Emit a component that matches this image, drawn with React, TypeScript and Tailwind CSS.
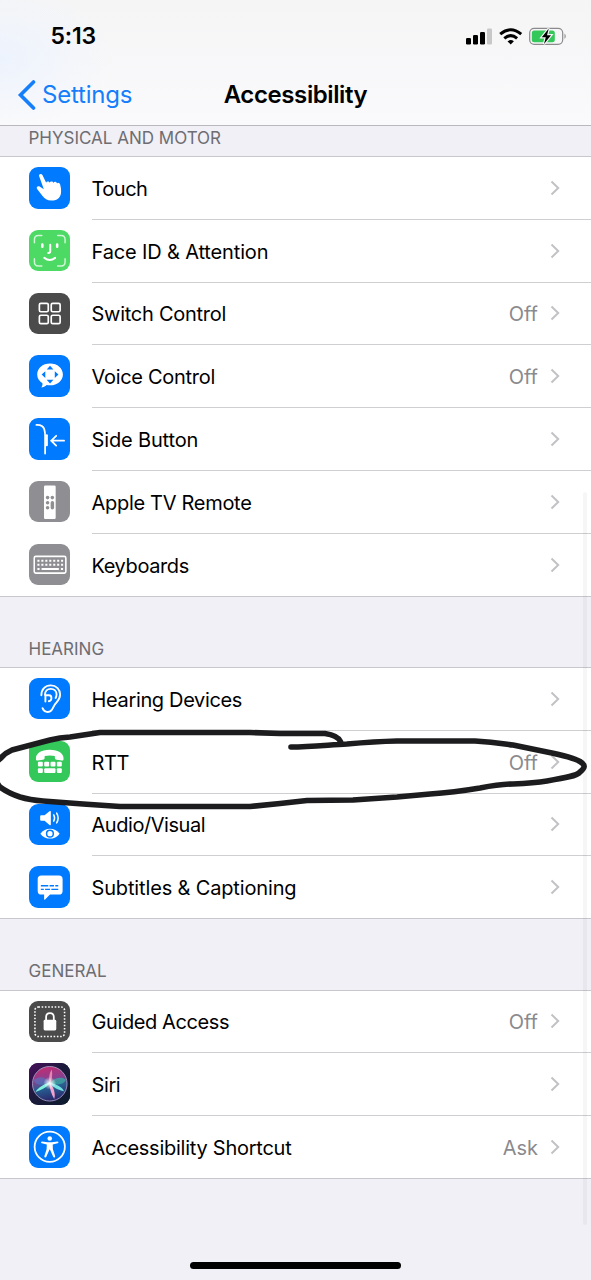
import type { ReactNode } from 'react';

type Item = {
  label: string;
  value?: string;
  bg: string;
  icon: ReactNode;
  tracking: string;
};

const touch = (
  <path
    fill="#fff"
    d="M10.200 9C9.700 7 12.700 6.200 13.600 8.200L17.400 16C17.600 14.200 20.400 14 21 15.900C21.400 14.100 24.200 14.100 24.800 16.100C25.400 14.400 28 14.800 28.400 16.800C29 15.200 31.200 16 31.600 18C32.300 21 32.800 23.500 32.300 27C31.500 31.500 27.500 34 23 34C18.500 34.200 16 32 13.500 29L8.200 22.200C7 20.400 9 18.700 10.800 19.800L15 22.600Z"
  />
);

const faceId = (
  <g fill="none" stroke="#fff" strokeLinecap="round">
    <path strokeWidth="1.5" opacity=".75" d="M5.500 13V9.500Q5.500 5.500 9.500 5.500H13M29 5.500h3.500q4 0 4 4V13M36.500 29v3.500q0 4-4 4H29M13 36.500H9.500q-4 0-4-4V29" />
    <path strokeWidth="2.600" d="M13.500 14.800v2.200M28.500 14.800v2.200" />
    <path strokeWidth="2" d="M21.500 15v6.500q0 1.800-2 1.800" />
    <path strokeWidth="2" d="M15.500 28.200q5.500 4.200 11 0" />
  </g>
);

const switchControl = (
  <g fill="none" stroke="#fff" strokeWidth="1.700">
    <rect x="10.500" y="10.500" width="9" height="8.500" rx="1.500" />
    <rect x="22.500" y="10.500" width="9" height="8.500" rx="1.500" />
    <rect x="10.500" y="22.500" width="9" height="8.500" rx="1.500" />
    <rect x="22.500" y="22.500" width="9" height="8.500" rx="1.500" />
  </g>
);

const voiceControl = (
  <g>
    <path fill="#fff" d="M21.300 8.700c7.600 0 13 4.900 13 11s-5.400 11-13 11c-1.200 0-2.300-.1-3.400-.4-1.600 1.500-3.700 2.500-5.500 2.500 1-1.200 1.400-2.600 1.200-4.200-3.200-2-5.300-5.200-5.300-8.900 0-6.100 5.400-11 13-11z" />
    <path fill="#007aff" d="m21.300 10.800 3.400 3.800h-6.800zM21.300 28.800l3.400-3.800h-6.800zM12.800 19.800l3.700-3.400v6.800zM29.800 19.800l-3.700-3.400v6.800z" />
  </g>
);

const sideButton = (
  <g fill="none" stroke="#fff" strokeLinecap="round" strokeWidth="1.800">
    <path d="M7.500 7q6.500-.3 8 4.500c.6 2 .8 4 .8 6.500V36" />
    <path strokeWidth="2.200" d="M18 17.500v10" />
    <path d="M35.500 23H23M27.500 18l-5 5 5 5" />
  </g>
);

const remote = (
  <g>
    <rect x="15.200" y="4.500" width="11.800" height="34" rx="1.200" fill="#fff" />
    <g fill="#8e8e93">
      <circle cx="18.800" cy="16.800" r="1.800" />
      <circle cx="23.600" cy="16.800" r="1.800" />
      <circle cx="18.800" cy="22" r="1.800" />
      <circle cx="18.800" cy="27" r="1.800" />
      <rect x="21.900" y="20.200" width="3.500" height="8.600" rx="1.750" />
    </g>
  </g>
);

const keyboard = (
  <g stroke="#fff" fill="none">
    <rect x="5.300" y="12.500" width="32" height="17" rx="1.600" strokeWidth="1.600" />
    <path strokeWidth="2" strokeDasharray="2.100 1.900" d="M8.500 17h26M8.500 21h26" />
    <path strokeWidth="2" d="M8.500 25.200h2.200M12.700 25.200h17.500M32.300 25.200h2.200" />
  </g>
);

const ear = (
  <g fill="none" stroke="#fff" strokeWidth="1.900" strokeLinecap="round">
    <path d="M12.500 17.500c0-6 3.800-10 9.500-10s9.500 4 9.500 9.300c0 4.700-2.800 6.800-4.700 9.200-2.200 2.800-2.500 5-4.300 6.900-2.300 2.400-7 2.200-8.800-2.400" />
    <path d="M16.200 17c0-4 2.300-6 5.800-6 3.600 0 5.900 2.500 5.900 5.800 0 1.400-.4 2.500-1 3.500" />
    <path d="M16.400 17.500h3.800c3.500.2 3.200 5.600-.2 6M16.600 17.500v6.300" />
  </g>
);

const tty = (
  <g fill="#fff">
    <path d="M7 18.200c-.3-5.600 5-9.400 14-9.400s14.300 3.800 14 9.400c-.1 1.300-.7 1.600-1.800 1.500l-5.200-.6c-1.200-.2-1.700-.7-1.800-1.800l-.1-2c-3-.9-7.200-.9-10.200 0l-.1 2c-.1 1.100-.6 1.600-1.800 1.800l-5.200.6c-1.100.1-1.700-.2-1.800-1.500z" />
    <rect x="9" y="21" width="5" height="4.800" rx="1" />
    <rect x="15.400" y="21" width="5" height="4.800" rx="1" />
    <rect x="21.800" y="21" width="5" height="4.800" rx="1" />
    <rect x="28.200" y="21" width="5" height="4.800" rx="1" />
    <rect x="9" y="27.600" width="5" height="4.800" rx="1" />
    <rect x="15.400" y="27.600" width="11.400" height="4.800" rx="1" />
    <rect x="28.200" y="27.600" width="5" height="4.800" rx="1" />
  </g>
);

const audioVisual = (
  <g>
    <path fill="#fff" d="M12.200 11.500h3.500l5.400-4.300q1-.5 1 .6v13q0 1-1 .6l-5.400-4.500h-3.500q-.9 0-.9-.9v-3.600q0-.9.900-.9z" />
    <path fill="none" stroke="#fff" strokeWidth="1.500" strokeLinecap="round" d="M25 11q1.800 3.200 0 6.400M28 9.200q3 5 0 10" />
    <path fill="#fff" d="M11.500 30c5-6.700 14.500-6.700 19.500 0-5 6.700-14.500 6.700-19.500 0z" />
    <circle cx="21.200" cy="30" r="3.400" fill="none" stroke="#007aff" strokeWidth="1.500" />
  </g>
);

const subtitles = (
  <g>
    <path fill="#fff" d="M12.500 9.500h17.800q3.700 0 3.700 3.700v12q0 3.700-3.700 3.700h-9l-5 4.900q-1 .8-1-.5v-4.400h-2.800q-3.700 0-3.700-3.700v-12q0-3.700 3.700-3.700z" />
    <path fill="none" stroke="#007aff" strokeWidth="1.400" d="M12 20h7.500M20.800 20h4.500M26.600 20h3M12 23.600h3M16.300 23.600h5M22.600 23.600h7" />
  </g>
);

const guidedAccess = (
  <g>
    <rect x="6" y="6" width="30" height="30" rx="3.500" fill="none" stroke="#fff" strokeWidth="1.600" strokeDasharray="1.600 1.700" />
    <rect x="14.800" y="19" width="12.800" height="10.800" rx="1.400" fill="#fff" />
    <path fill="none" stroke="#fff" strokeWidth="1.800" d="M17.300 19.500v-3.200q0-4 3.900-4t3.900 4v3.200" />
  </g>
);

const siri = (
  <g>
    <defs>
      <linearGradient id="siriBg" x1="0" y1="0" x2="1" y2="1">
        <stop offset="0" stopColor="#4a0f5c" />
        <stop offset=".45" stopColor="#1c1a3c" />
        <stop offset="1" stopColor="#0b1b2c" />
      </linearGradient>
      <linearGradient id="siriOrb" x1=".4" y1="0" x2=".6" y2="1">
        <stop offset="0" stopColor="#c22c72" />
        <stop offset=".35" stopColor="#8c3f8e" />
        <stop offset=".6" stopColor="#275f92" />
        <stop offset="1" stopColor="#2a2368" />
      </linearGradient>
      <radialGradient id="siriGlow">
        <stop offset="0" stopColor="#fff" />
        <stop offset="1" stopColor="#fff" stopOpacity="0" />
      </radialGradient>
    </defs>
    <rect width="42" height="42" fill="url(#siriBg)" />
    <circle cx="21" cy="21" r="17.500" fill="url(#siriOrb)" stroke="#a79bc4" strokeWidth=".9" />
    <path fill="#3d8fd8" opacity=".45" d="M21 20C16 13 10 13 5 17c0 5 8 7 16 3z" />
    <path fill="#2fc3a8" opacity=".6" d="M21 20c5-5 12-7 16.500-3-2 5-9 6-16.500 3z" />
    <path fill="#7ef0dc" d="M21.500 19.500c-6 1.500-12 5-15 10 5-2 12-4.500 15-10z" />
    <path fill="#7ef0ea" opacity=".9" d="M21 20c6 1 12 4 14.500 8.500-6-1-12-4-14.500-8.500z" />
    <path fill="#f5a0d0" d="M20.500 20c.2 6 2.500 12 5 16.500 1.500-5 0-12-5-16.500z" />
    <path fill="#ff9fc0" opacity=".75" d="M21 20.500c-1.200-5-.8-10 2-14 1 5 .5 10-2 14z" />
    <circle cx="21" cy="20.500" r="6.500" fill="url(#siriGlow)" />
  </g>
);

const accessibility = (
  <g>
    <circle cx="21" cy="21" r="15.300" fill="none" stroke="#fff" strokeWidth="1.800" />
    <circle cx="21" cy="12.600" r="2.300" fill="#fff" />
    <path fill="#fff" d="m13.200 15.700 5.800.8h4l5.800-.8q1 0 1 .8t-.8 1l-5 1.200.2 4.800 2.300 7q.1 1-.7 1.300t-1.300-.6l-3.300-7.300h-.4l-3.300 7.300q-.5.900-1.300.6t-.7-1.300l2.300-7 .2-4.800-5-1.200q-.8-.2-.8-1t1-.8z" />
  </g>
);

const motor: Item[] = [
  { label: 'Touch', bg: 'bg-[#007aff]', icon: touch, tracking: 'tracking-[-0.5px]' },
  { label: 'Face ID & Attention', bg: 'bg-[#4cd964]', icon: faceId, tracking: 'tracking-[-0.15px]' },
  { label: 'Switch Control', value: 'Off', bg: 'bg-[#4b4b4c]', icon: switchControl, tracking: 'tracking-[-0.27px]' },
  { label: 'Voice Control', value: 'Off', bg: 'bg-[#007aff]', icon: voiceControl, tracking: 'tracking-[-0.3px]' },
  { label: 'Side Button', bg: 'bg-[#007aff]', icon: sideButton, tracking: 'tracking-[-0.15px]' },
  { label: 'Apple TV Remote', bg: 'bg-[#8e8e93]', icon: remote, tracking: 'tracking-[-0.3px]' },
  { label: 'Keyboards', bg: 'bg-[#8e8e93]', icon: keyboard, tracking: 'tracking-[-0.4px]' },
];

const hearing: Item[] = [
  { label: 'Hearing Devices', bg: 'bg-[#007aff]', icon: ear, tracking: 'tracking-[-0.35px]' },
  { label: 'RTT', value: 'Off', bg: 'bg-[#34c759]', icon: tty, tracking: 'tracking-[-0.4px]' },
  { label: 'Audio/Visual', bg: 'bg-[#007aff]', icon: audioVisual, tracking: 'tracking-[-0.45px]' },
  { label: 'Subtitles & Captioning', bg: 'bg-[#007aff]', icon: subtitles, tracking: 'tracking-[-0.15px]' },
];

const general: Item[] = [
  { label: 'Guided Access', value: 'Off', bg: 'bg-[#4b4b4c]', icon: guidedAccess, tracking: 'tracking-[-0.4px]' },
  { label: 'Siri', bg: 'bg-[#1c1a3c]', icon: siri, tracking: 'tracking-[-0.4px]' },
  { label: 'Accessibility Shortcut', value: 'Ask', bg: 'bg-[#007aff]', icon: accessibility, tracking: 'tracking-[-0.25px]' },
];

function Row({ item, last }: { item: Item; last: boolean }) {
  return (
    <div className={`flex items-stretch pl-[28.5px] ${last ? 'h-[61.8px]' : 'h-[62.8px]'}`}>
      <div className={`mt-[10px] h-[41.5px] w-[41.5px] shrink-0 overflow-hidden rounded-[9px] ${item.bg}`}>
        <svg viewBox="0 0 42 42" className="h-full w-full">{item.icon}</svg>
      </div>
      <div className={`ml-[21.5px] flex flex-1 items-center pr-[31px] ${last ? '' : 'border-b border-[#cfcfd2]'}`}>
        <span className={`mt-[2px] flex-1 whitespace-nowrap text-[20px] ${item.tracking}`}>{item.label}</span>
        {item.value && <span className="mt-[2px] mr-[12px] text-[20px] text-[#8a8a8e]">{item.value}</span>}
        <svg viewBox="0 0 10 16" className="h-4 w-2.5" fill="none" stroke="#c2c2c6" strokeWidth="2">
          <path d="m1.500 1.500 6.700 6.500-6.700 6.500" />
        </svg>
      </div>
    </div>
  );
}

function Group({ items }: { items: Item[] }) {
  return (
    <div className="shrink-0 border-y border-[#c8c8cc] bg-white">
      {items.map((item, i) => (
        <Row key={item.label} item={item} last={i === items.length - 1} />
      ))}
    </div>
  );
}

function StatusIcons() {
  return (
    <svg viewBox="0 0 104 20" className="h-5 w-[104px]">
      <rect x="1" y="12" width="5" height="6.500" rx="1.200" />
      <rect x="8" y="9" width="5" height="9.500" rx="1.200" />
      <rect x="15" y="6" width="5" height="12.500" rx="1.200" />
      <rect x="22" y="2.500" width="5" height="16" rx="1.200" fill="#c8c8c8" />
      <g fill="none" stroke="#000" strokeWidth="3">
        <path d="M35.200 8.200q10.500-9 21 0" />
        <path d="M39.300 12.300q6.400-5.400 12.800 0" />
      </g>
      <path d="M42.500 15.300q3.200-2.400 6.400 0l-3.200 3.300z" />
      <rect x="64.700" y="2.300" width="33" height="16" rx="4.500" fill="none" stroke="#8b8b8d" strokeWidth="1.200" />
      <path d="M99.500 7.500q2.500 2.700 0 5.600z" fill="#8b8b8d" />
      <rect x="66.800" y="4.400" width="23" height="11.800" rx="2.500" fill="#34c759" />
      <path d="m83.800 2.500-7 8.800h4l-1.800 6.700 7-8.800h-4z" stroke="#f6f6f7" strokeWidth="2.400" paintOrder="stroke" />
    </svg>
  );
}

export default function App() {
  return (
    <div className="relative flex h-[1280px] w-[591px] flex-col overflow-hidden bg-[#f1f0f6] font-['Inter','Liberation_Sans',sans-serif] text-black">
      <header className="h-[126px] shrink-0 border-b border-[#b9b9bc] bg-[radial-gradient(ellipse_110px_70px_at_0px_58px,#edf3fd,transparent),linear-gradient(to_bottom,#f5f5f6,#fafafc)]">
        <div className="flex h-[70px] items-center justify-between pt-[2px] pr-[22px] pl-[50.5px]">
          <span className="text-[23px] font-semibold tracking-[-0.2px]">5:13</span>
          <StatusIcons />
        </div>
        <div className="grid h-[50px] grid-cols-[1fr_auto_1fr] items-center">
          <div className="flex items-center pl-[17px] text-[#147efb]">
            <svg viewBox="0 0 20 30" className="h-[30px] w-5" fill="none" stroke="currentColor" strokeWidth="3.600" strokeLinecap="round">
              <path d="M16.500 2 3.500 15l13 13" />
            </svg>
            <span className="ml-[5px] text-[24px] tracking-[-0.2px]">Settings</span>
          </div>
          <h1 className="text-[24px] font-semibold tracking-[-0.4px]">Accessibility</h1>
        </div>
      </header>

      <h2 className="h-[30px] shrink-0 pt-px pl-[28.500px] text-[17px] leading-[22px] text-[#6d6d72]">PHYSICAL AND MOTOR</h2>
      <Group items={motor} />
      <h2 className="h-[70.4px] shrink-0 pt-[41px] pl-[28.500px] text-[17px] leading-[22px] text-[#6d6d72]">HEARING</h2>
      <Group items={hearing} />
      <h2 className="h-[70.4px] shrink-0 pt-[41px] pl-[28.500px] text-[17px] leading-[22px] text-[#6d6d72]">GENERAL</h2>
      <Group items={general} />

      {/* scroll indicator */}
      <div className="absolute top-[492px] right-[4px] h-[733px] w-1 rounded-full bg-black/[0.035]" />

      {/* marker stroke around RTT */}
      <svg viewBox="0 0 591 100" className="absolute top-[720px] left-0 h-[100px] w-[591px]" fill="none" stroke="#1c1c1e" strokeWidth="5.600" strokeLinecap="round" strokeLinejoin="round">
        <path d="M291 27C310 27 328 25 347 24Q375 21.500 397 21H475C495 22 505 24 513 25L547 32C562 35 574 38 580 41.500C586 45 585 48 580 52C577 56 565 58 547 61C535 63 525 63.500 513 64C500 64 490 66 480 68C462 71 445 73 430 74L397 77L353 80L307 80.500L280 83.500L250 86.500H120L83 84L43 81Q30 80 20 77Q8 73 0 67Q-7 59-5 47Q-4 41 1 38Q5 33 12 30L50 20Q60 17.500 70 17L100 12.500H250L280 13.500H325Q338 15.500 340.500 21.500" />
      </svg>

      <div className="absolute bottom-[11px] left-[190px] h-[7px] w-[211px] rounded-full bg-black" />
    </div>
  );
}
